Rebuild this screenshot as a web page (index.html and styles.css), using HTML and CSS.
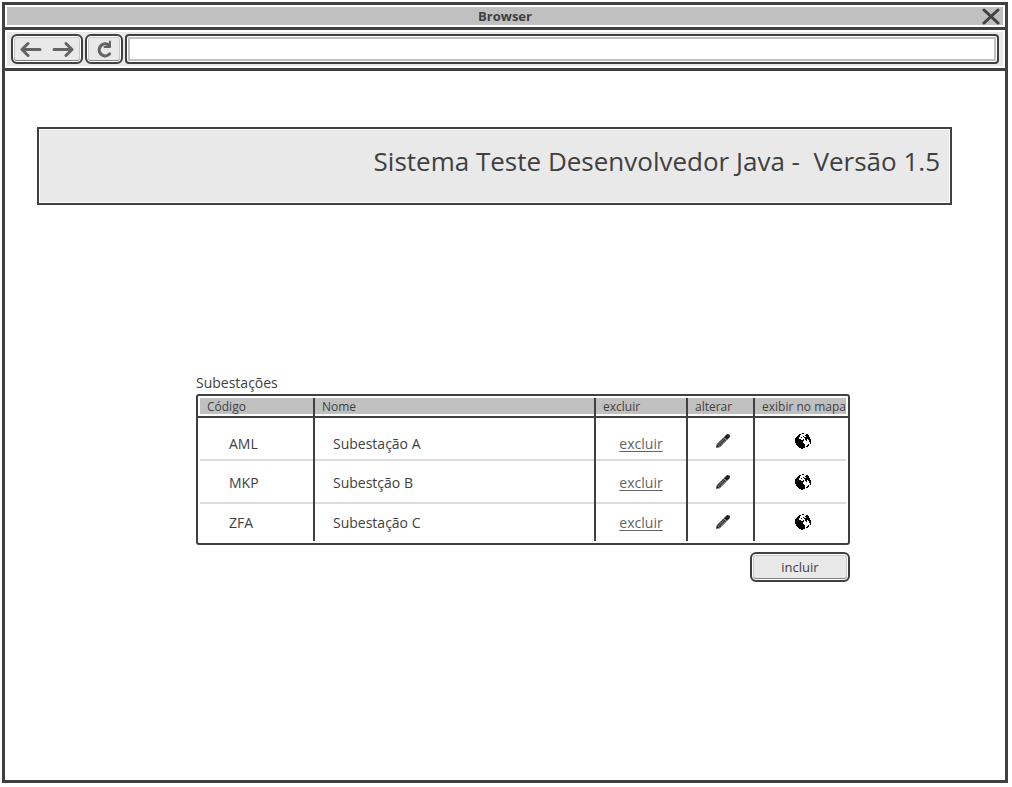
FILE: index.html
```html
<!DOCTYPE html>
<html lang="pt-BR">
<head>
<meta charset="utf-8">
<meta name="viewport" content="width=device-width, initial-scale=1">
<title>Subestações</title>
<link rel="stylesheet" href="styles.css">
</head>
<body>
<svg class="symbols" aria-hidden="true">
  <symbol id="pencil" viewBox="0 0 14 14">
    <path d="M2.500 11.500 9 5" stroke="#444" stroke-width="4.500"/>
    <path d="M3.500 9.500 7.500 5.500M5 11 9 7" stroke="#777" stroke-width=".8"/>
    <path d="M0 13.800 .8 10 4 13.200Z" fill="#222"/>
    <path d="M8 3 11 6" stroke="#bbb" stroke-width="1.200"/>
    <path d="M10 4 11.800 2.200" stroke="#222" stroke-width="4.200" stroke-linecap="round"/>
    <path d="M8 3.600 10.400 6" stroke="#ccc" stroke-width="1"/>
  </symbol>
  <symbol id="globe" viewBox="0 0 16 16">
    <circle cx="8" cy="8" r="7.700" fill="#fff" stroke="#ccc" stroke-width=".4"/>
    <path d="M4 1H6V2H5V4H4V6H6V7H8V6H9V8H8V10H9V11H10V15H8V16H6V15H4V14H3V13H2V12H1V10H0V5H1V4H2V3H3V2H4Z"/>
    <path d="M7 0H9V1H7ZM8 3H9V4H8ZM6 4H7V5H6ZM11 1H13V2H14V4H15V6H16V11H15V9H14V7H13V6H12V8H11V7H10V5H9V4H11V3H10V2H11ZM13 11H14V13H13V14H11V13H12V12H13Z"/>
  </symbol>
</svg>
<div class="window">
  <header class="titlebar">
    <span class="window-title">Browser</span>
    <button class="close" type="button" aria-label="Fechar">
      <svg viewBox="0 0 18 18" width="18" height="18"><path d="M2 3 16 16M16 3 2 16"/></svg>
    </button>
  </header>
  <div class="toolbar">
    <div class="tool-box history">
      <button type="button" aria-label="Voltar"><svg viewBox="0 0 22 18" width="22" height="18"><path d="M20 9.500H2M8 3.500 2 9.500l6 6"/></svg></button>
      <button type="button" aria-label="Avançar"><svg viewBox="0 0 22 18" width="22" height="18"><path d="M2 9.500h18M14 3.500l6 6-6 6"/></svg></button>
    </div>
    <button class="tool-box reload" type="button" aria-label="Recarregar"><svg viewBox="0 0 18 18" width="18" height="18"><path d="M14.500 14A6 6 0 1 1 13 4.500" stroke-width="3.200"/><path d="M15 1.500V7H9.500" stroke-width="2"/></svg></button>
    <input class="address" type="text" aria-label="Endereço">
  </div>
  <main class="page">
    <div class="banner"><h1>Sistema Teste Desenvolvedor Java - &nbsp;Versão 1.5</h1></div>
    <section class="listing">
      <h2 id="listing-title">Subestações</h2>
      <div class="frame">
        <table aria-labelledby="listing-title">
          <colgroup><col class="col-code"><col><col class="col-delete"><col class="col-edit"><col class="col-map"></colgroup>
          <thead>
            <tr>
              <th scope="col"><span>Código</span></th>
              <th scope="col"><span>Nome</span></th>
              <th scope="col"><span>excluir</span></th>
              <th scope="col"><span>alterar</span></th>
              <th scope="col"><span>exibir no mapa</span></th>
            </tr>
          </thead>
          <tbody>
            <tr>
              <td class="code">AML</td><td class="name">Subestação A</td>
              <td class="action"><a href="#">excluir</a></td>
              <td class="action edit"><button type="button" aria-label="Alterar AML"><svg width="14" height="14"><use href="#pencil"/></svg></button></td>
              <td class="action map"><button type="button" aria-label="Exibir AML no mapa"><svg width="16" height="16"><use href="#globe"/></svg></button></td>
            </tr>
            <tr>
              <td class="code">MKP</td><td class="name">Subestção B</td>
              <td class="action"><a href="#">excluir</a></td>
              <td class="action edit"><button type="button" aria-label="Alterar MKP"><svg width="14" height="14"><use href="#pencil"/></svg></button></td>
              <td class="action map"><button type="button" aria-label="Exibir MKP no mapa"><svg width="16" height="16"><use href="#globe"/></svg></button></td>
            </tr>
            <tr>
              <td class="code">ZFA</td><td class="name">Subestação C</td>
              <td class="action"><a href="#">excluir</a></td>
              <td class="action edit"><button type="button" aria-label="Alterar ZFA"><svg width="14" height="14"><use href="#pencil"/></svg></button></td>
              <td class="action map"><button type="button" aria-label="Exibir ZFA no mapa"><svg width="16" height="16"><use href="#globe"/></svg></button></td>
            </tr>
          </tbody>
        </table>
      </div>
      <button class="add" type="button">incluir</button>
    </section>
  </main>
</div>
</body>
</html>
```
FILE: styles.css
```css
:root {
  --ink: #404041;
  --grey: #c0c0c0;
  --pale: #e9e9e9;
}

* { box-sizing: border-box; }

body {
  margin: 0;
  padding: 2px 4px 4px 2px;
  min-height: 100vh;
  display: flex;
  background: #fff;
  color: var(--ink);
  font: 14px/20px "Open Sans", sans-serif;
}

button, input { font: inherit; color: inherit; }

button { padding: 0; border: 0; background: none; cursor: pointer; }

svg { display: block; fill: none; }

.symbols { position: absolute; width: 0; height: 0; }

.window {
  flex: 1;
  min-width: 0;
  display: flex;
  flex-direction: column;
  border: 3px solid var(--ink);
}

.titlebar {
  display: grid;
  grid-template-columns: 1fr auto 1fr;
  align-items: center;
  height: 22px;
  border: 2px solid #fff;
  background: var(--grey);
}

.window-title { grid-column: 2; font-size: 13px; line-height: 18px; font-weight: 700; }

.close { justify-self: end; margin-right: 3px; }

.close svg { stroke: var(--ink); stroke-width: 3; stroke-linecap: round; }

.toolbar {
  display: flex;
  gap: 2px;
  padding: 4px 6px;
  border: solid var(--ink);
  border-width: 3px 0;
  background: var(--pale);
  box-shadow: inset 0 0 0 2px #fff;
}

.tool-box {
  display: flex;
  align-items: center;
  justify-content: center;
  height: 30px;
  border: 2px solid var(--ink);
  border-radius: 6px;
}

.tool-box, .add {
  background: var(--pale);
  box-shadow: inset 0 0 0 1px #fff, inset 0 -2px 0 0 #808080, inset 0 0 0 2px #c8c8c8;
}

.tool-box svg { stroke: #626363; stroke-width: 3; stroke-linecap: round; stroke-linejoin: round; }

.history { width: 72px; gap: 10px; }

.reload { width: 38px; }

.address {
  flex: 1;
  min-width: 0;
  height: 30px;
  padding: 0 8px;
  border: 2px solid var(--ink);
  border-radius: 4px;
  background: #fff;
  box-shadow: inset 0 0 0 1px #fff, inset 0 0 0 3px var(--grey);
}

.page { flex: 1; padding: 56px 53px 32px 32px; }

.banner {
  min-height: 78px;
  padding: 14px 10px;
  border: 2px solid var(--ink);
  background: var(--pale);
  box-shadow: inset 0 0 0 1px #fff;
  text-align: right;
}

h1 { margin: 0; font-size: 26px; line-height: 36px; font-weight: 400; }

.listing {
  display: flex;
  flex-direction: column;
  margin: 168px 102px 0 159px;
}

h2 { margin: 0 0 1px; font-size: 14px; line-height: 20px; font-weight: 400; }

.frame { padding: 2px 0; border: 2px solid var(--ink); border-radius: 3px; }

table { width: 100%; table-layout: fixed; border-collapse: separate; border-spacing: 0; }

.col-code { width: 117px; }
.col-delete { width: 92px; }
.col-edit { width: 67px; }
.col-map { width: 93px; }

th, td { padding: 0; border-right: 2px solid var(--ink); }

th:last-child, td:last-child { border-right: 0; }

th {
  padding-bottom: 2px;
  border-bottom: 2px solid var(--ink);
  text-align: left;
  font-size: 12px;
  line-height: 14px;
  font-weight: 400;
}

th span { display: block; padding: 2px 0 0 7px; background: var(--grey); white-space: nowrap; }

th:first-child { padding-left: 2px; }

th:last-child { padding-right: 2px; }

td { height: 43px; background: linear-gradient(#ddd, #ddd) 0 100% / 100% 2px no-repeat; }

td:first-child { background-position: 2px 100%; }

td:last-child { background-position: -2px 100%; }

tr:first-child td { padding-top: 8px; }

tr:last-child td { height: 37px; background: none; }

td.code { padding-left: 31px; }

td.name { padding-left: 18px; }

.action { text-align: center; }

.action button { display: block; margin: 0 auto; }

.action a { color: #626363; text-underline-offset: 2px; }

.action.edit { padding: 0 0 2px 4px; }

.action.map { padding: 0 0 1px 3px; }

tr:first-child .action.edit,
tr:first-child .action.map { padding-top: 4px; }

#globe { fill: #000; }

.add {
  align-self: flex-end;
  width: 100px;
  height: 30px;
  margin-top: 7px;
  border: 2px solid var(--ink);
  border-radius: 6px;
  font-size: 13px;
}
```
